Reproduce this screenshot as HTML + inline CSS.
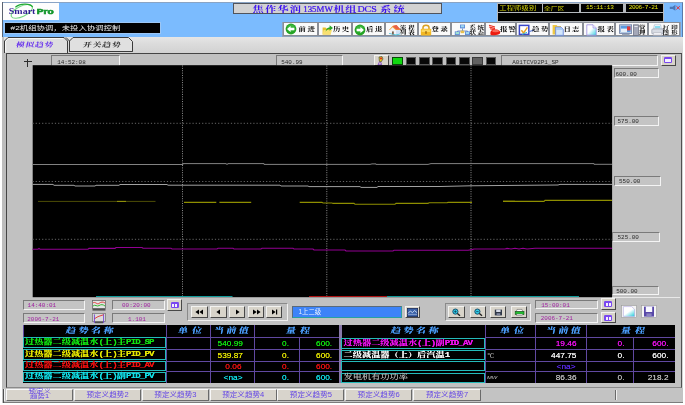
<!DOCTYPE html>
<html lang="zh">
<head>
<meta charset="utf-8">
<title>焦作华润135MW机组DCS系统</title>
<style>
html,body{margin:0;padding:0;}
body{width:685px;height:405px;background:#fff;position:relative;overflow:hidden;font-family:"Liberation Sans","Noto Sans CJK SC",sans-serif;}
.a{position:absolute;box-sizing:border-box;}
.t{position:absolute;white-space:nowrap;line-height:1;}
.q{transform:scaleY(0.74);transform-origin:50% 50%;}
.kai{font-family:"Liberation Serif","Noto Serif CJK SC",serif;font-style:normal;font-weight:bold;}
.kai.q{transform:scaleY(0.74) skewX(-9deg);}
.song{font-family:"Liberation Serif","Noto Serif CJK SC",serif;}
.mono{font-family:"Liberation Mono","Noto Sans CJK SC",monospace;}
.sunk{position:absolute;box-sizing:border-box;background:#c4c4c4;border:1px solid;border-color:#7a7a7a #f4f4f4 #f4f4f4 #7a7a7a;}
.btn{position:absolute;box-sizing:border-box;background:#d8d4ca;border:1px solid;border-color:#f2f2f0 #484848 #484848 #f2f2f0;}
.tb{position:absolute;box-sizing:border-box;top:22px;height:14px;background:#fafafa;border:1px solid #8a8e96;}
.tb .t{color:#000;font-size:7.4px;font-style:normal;font-weight:700;transform:scaleY(0.76);transform-origin:50% 50%;}
.tb .t.s{font-size:6.5px;}
.blk{position:absolute;background:#000;}
.yl{color:#e4e410;font-size:7.5px;}
.nm{position:absolute;box-sizing:border-box;border:1px solid #24baba;height:12px;}
.nm span.song{position:absolute;left:1.4px;top:-0.2px;font-size:9.2px;line-height:9.2px;font-weight:bold;white-space:nowrap;letter-spacing:0px;transform:scaleY(0.76);transform-origin:0 50%;text-shadow:0 0 0.5px currentColor;}
.nm i{font-family:"Liberation Mono",monospace;font-style:normal;font-size:9.2px;letter-spacing:-0.92px;font-weight:bold;}
.v{position:absolute;font-size:8.3px;line-height:11px;margin-top:1px;text-shadow:0 0 0.6px currentColor;transform:scaleY(0.76);transform-origin:50% 50%;text-align:right;white-space:nowrap;}
.hd{position:absolute;font-size:10px;line-height:12px;text-shadow:0 0 0.5px currentColor;transform:scaleY(0.76) skewX(-9deg);transform-origin:50% 50%;color:#4a9cf8;font-weight:700 !important;white-space:nowrap;letter-spacing:2.5px;}
.bt{display:inline-block;transform:scaleY(0.88);transform-origin:50% 50%;}
.bb{position:absolute;box-sizing:border-box;top:389px;height:12px;background:#d8d4cc;border:1px solid;border-color:#f8f8f8 #6a6a6a #6a6a6a #f8f8f8;color:#6446e6;font-size:7.6px;line-height:10px;text-align:center;white-space:nowrap;}
</style>
</head>
<body>
<div id="root" style="position:absolute;left:0;top:0;width:685px;height:405px;will-change:transform;">
<!-- window -->
<div class="a" style="left:2px;top:2px;width:681px;height:401px;background:#d4d4d4;"></div>
<div class="a" style="left:2px;top:2px;width:1px;height:35px;background:#5a6270;"></div>
<!-- blue header -->
<div class="a" style="left:3px;top:2px;width:680px;height:35px;background:#7bbbfe;border-top:1px solid #8aa4c4;border-right:1px solid #5a7aa8;"></div>

<!-- logo -->
<div class="a" style="left:3px;top:3px;width:56px;height:17px;background:#fdfdfd;"></div>
<svg class="a" style="left:3px;top:3px;" width="56" height="17" viewBox="0 0 56 17">
<ellipse cx="18.8" cy="8.4" rx="11.6" ry="5.2" transform="rotate(-26 18.8 8.4)" fill="none" stroke="#3cc850" stroke-width="1" opacity="0.7"/>
<path d="M12.4 4.2 C17 0.4 27 0 29.6 4" fill="none" stroke="#1faa34" stroke-width="1.3"/>
<text x="5.8" y="10.9" font-family="Liberation Serif, serif" font-weight="bold" font-size="8.2" fill="#2c1c90" textLength="26.6" lengthAdjust="spacingAndGlyphs">Smart</text>
<text x="33.8" y="10.8" font-family="Liberation Sans, sans-serif" font-weight="bold" font-size="7" fill="#12962a" stroke="#12962a" stroke-width="0.55" textLength="17" lengthAdjust="spacingAndGlyphs">Pro</text>
</svg>
<!-- message bar -->
<div class="a" style="left:4px;top:22px;width:157px;height:12px;background:#9cc6f4;"></div>
<div class="blk" style="left:5px;top:23px;width:155px;height:10px;"></div>
<div class="t q" style="left:10.5px;top:24.2px;font-size:8.4px;font-weight:400;color:#ececec;">#2机组协调，未投入协调控制</div>
<!-- title -->
<div class="a" style="left:233px;top:3px;width:209px;height:11px;background:#d2d2d2;border:1px solid #50545c;"></div>
<svg class="a" style="left:233px;top:3px;" width="209" height="11" viewBox="233 3 209 11" id="title">
<g transform="translate(0 12.3) scale(1 0.7)" font-family="Liberation Serif, Noto Serif CJK SC, serif" fill="#3a10f0">
<text x="252.6" y="0" font-size="11.2" font-weight="700" textLength="48.4" lengthAdjust="spacing">焦作华润</text>
<text x="303.2" y="0" font-size="12.8" stroke="#3a10f0" stroke-width="0.35" textLength="29.6" lengthAdjust="spacingAndGlyphs">135MW</text>
<text x="333.4" y="0" font-size="11.2" font-weight="700" textLength="23" lengthAdjust="spacing">机组</text>
<text x="357.4" y="0" font-size="12.8" stroke="#3a10f0" stroke-width="0.35" textLength="19.4" lengthAdjust="spacingAndGlyphs">DCS</text>
<text x="380" y="0" font-size="11.2" font-weight="700" textLength="24.6" lengthAdjust="spacing">系统</text>
</g></svg>

<!-- top-right status -->
<div class="a" style="left:497px;top:3px;width:167px;height:19px;background:#b4b8bc;"></div>
<div class="blk" style="left:497.5px;top:3.5px;width:44.5px;height:8px;"></div>
<div class="blk" style="left:542.8px;top:3.5px;width:36.2px;height:8px;"></div>
<div class="blk" style="left:581px;top:3.5px;width:42px;height:8px;"></div>
<div class="blk" style="left:625.5px;top:3.5px;width:37.5px;height:8px;"></div>
<div class="blk" style="left:497.5px;top:12.8px;width:165.5px;height:8px;"></div>
<div class="t yl q" style="left:499.2px;top:4.9px;font-size:7.3px;font-weight:400;letter-spacing:0.15px;color:#d4d408;">工程师级别</div>
<div class="t yl q" style="left:543.8px;top:4.9px;font-size:6.9px;font-weight:400;letter-spacing:0px;color:#d4d408;">全厂区</div>
<div class="t yl mono" style="left:586px;top:5.4px;font-size:6.1px;letter-spacing:-0.2px;">15:11:13</div>
<div class="t yl mono" style="left:628.8px;top:5.4px;font-size:6.1px;letter-spacing:-0.45px;">2006-7-21</div>
<!-- speaker -->
<svg class="a" style="left:668.5px;top:4px;" width="13" height="8" viewBox="0 0 13 8">
<path d="M0.8 2.8 H3.6 L6.4 0.8 V6.8 L3.6 5 H0.8 Z" fill="#4a78b8"/>
<path d="M7.4 2.2 L10.8 5.4 M10.8 2.2 L7.4 5.4" stroke="#f02020" stroke-width="0.9" fill="none"/>
</svg>
<!-- toolbar -->
<div class="a" style="left:282px;top:21.5px;width:399px;height:15px;background:#8fa2ba;"></div>
<div class="tb" style="left:283px;width:35px;">
 <svg class="a" style="left:0.6px;top:0.4px;" width="12" height="12" viewBox="0 0 12 12"><circle cx="6" cy="6" r="5.4" fill="#25a425"/><circle cx="6" cy="5" r="3.6" fill="#4ec44e" opacity="0.6"/><path d="M2 6 L5.6 3 V4.8 H9.4 V7.2 H5.6 V9 Z" fill="#fff"/></svg>
 <div class="t kai" style="left:14.5px;top:2.6px;letter-spacing:1.6px;">前进</div></div>
<div class="tb" style="left:318px;width:34px;">
 <svg class="a" style="left:2.6px;top:0.6px;" width="12" height="11" viewBox="0 0 12 11"><path d="M0.6 3.6 H3.6 L4.4 4.6 H8.6 V10.4 H0.6 Z" fill="#e8c030"/><path d="M1.6 6 H10 L8.6 10.4 H0.6 Z" fill="#f8e070"/><path d="M3.6 7.6 C4 4.8 5.6 3.4 7.6 3.2 V1.2 L11 4 L7.6 6.8 V5 C6 5.2 4.8 6 3.6 7.6 Z" fill="#2aa82a"/></svg>
 <div class="t kai" style="left:14.0px;top:2.6px;letter-spacing:1.4px;">历史</div></div>
<div class="tb" style="left:352px;width:33px;">
 <svg class="a" style="left:0.5px;top:0.5px;" width="12" height="12" viewBox="0 0 12 12"><circle cx="6" cy="6" r="5.4" fill="#25a425"/><circle cx="6" cy="5" r="3.6" fill="#4ec44e" opacity="0.6"/><path d="M10 6 L6.4 3 V4.8 H2.6 V7.2 H6.4 V9 Z" fill="#fff"/></svg>
 <div class="t kai" style="left:13.0px;top:2.6px;letter-spacing:1.5px;">后退</div></div>
<div class="tb" style="left:385px;width:33px;">
 <svg class="a" style="left:1.5px;top:0.5px;" width="13" height="12" viewBox="0 0 13 12"><path d="M0.5 6.5 L4.5 2 L8.5 1 L12.5 5.5 L12 6 H0.8 Z" fill="#f0a23a"/><path d="M4.5 2 L8.5 1 L12.5 5.5 L8.4 5.5 Z" fill="#e8604a"/><path d="M1.5 6.2 L4.6 3.2 L8 6.2 V11 H1.5 Z" fill="#f2f2f6"/><path d="M8 6.2 H12 V10 L8 11 Z" fill="#cfe0f4"/><path d="M1 9.8 L8 11.4 L12.4 10.2 L12.4 9.4 L8 10.4 L1 9 Z" fill="#4cc4dc"/><rect x="4" y="7.4" width="1.8" height="3" fill="#7a6450"/></svg>
 <div class="t kai s" style="left:13.7px;top:0.6px;letter-spacing:2.0px;">流程</div>
 <div class="t kai s" style="left:13.7px;top:5.9px;letter-spacing:2.0px;">列表</div></div>
<div class="tb" style="left:418px;width:33px;">
 <svg class="a" style="left:1px;top:0.5px;" width="12" height="12" viewBox="0 0 12 12"><path d="M3 5.5 V3.6 C3 0.4 9 0.4 9 3.6 V5.5" fill="none" stroke="#d8a020" stroke-width="1.5"/><rect x="0.8" y="4.8" width="10.4" height="6.6" rx="1" fill="#f2b824"/><rect x="1.6" y="5.6" width="8.8" height="2.4" fill="#fbd760"/><rect x="5.2" y="7.2" width="1.6" height="2.6" fill="#a87410"/></svg>
 <div class="t kai" style="left:12.5px;top:2.6px;letter-spacing:1.5px;">登录</div></div>
<div class="tb" style="left:451px;width:34px;">
 <svg class="a" style="left:1.5px;top:0.5px;" width="17" height="12" viewBox="0 0 17 12"><path d="M8.5 4.5 V7 M3.5 8.5 V7 H13.5 V8.5" stroke="#6a8ac0" stroke-width="0.9" fill="none"/><rect x="6" y="0.6" width="5" height="3.8" fill="#5a86d8"/><rect x="6.8" y="1.2" width="3.4" height="2.2" fill="#9fd8f0"/><rect x="0.8" y="7.4" width="5" height="3.8" fill="#5a86d8"/><rect x="1.6" y="8" width="3.4" height="2.2" fill="#9fe0d0"/><rect x="11" y="7.4" width="5" height="3.8" fill="#5a86d8"/><rect x="11.8" y="8" width="3.4" height="2.2" fill="#9fd8f0"/><rect x="6.6" y="6.6" width="3.6" height="2.6" fill="#e8c050"/></svg>
 <div class="t kai s" style="left:17.5px;top:0.6px;letter-spacing:1.6px;">系统</div>
 <div class="t kai s" style="left:17.5px;top:5.9px;letter-spacing:1.6px;">状态</div></div>
<div class="tb" style="left:485px;width:31px;">
 <svg class="a" style="left:1.5px;top:0.5px;" width="13" height="12" viewBox="0 0 13 12"><path d="M1 1.2 L7 3 M1.2 3 L7 4.6 M2 4.8 L7 6" stroke="#ee2a1a" stroke-width="1.1"/><path d="M2.4 8.4 C2.4 5.6 6 5 9 5.6 C12 6.2 12.6 8 12 9.6 C10 11.6 4 11.8 2.4 10.4 Z" fill="#ee1c10"/><ellipse cx="7.6" cy="7" rx="3.4" ry="1.2" fill="#fa6a5a"/></svg>
 <div class="t kai" style="left:13.9px;top:2.6px;letter-spacing:1.2px;">报警</div></div>
<div class="tb" style="left:516px;width:33px;">
 <svg class="a" style="left:0.5px;top:0.5px;" width="17" height="12" viewBox="0 0 17 12"><rect x="1.4" y="1.4" width="9.4" height="9" fill="#fff" stroke="#3a46c8" stroke-width="1.5"/><path d="M3.4 6.2 L5.6 9 L9.4 3.4" fill="none" stroke="#e8a020" stroke-width="1.4"/><path d="M10 8 L16 6" stroke="#5a7ad8" stroke-width="1.2"/><path d="M4 10.4 L9 8.4" stroke="#30b8c8" stroke-width="1"/></svg>
 <div class="t kai" style="left:15.0px;top:2.6px;letter-spacing:1.6px;">趋势</div></div>
<div class="tb" style="left:549px;width:34px;">
 <svg class="a" style="left:2px;top:0.5px;" width="12" height="12" viewBox="0 0 12 12"><path d="M0.6 1 H4.6 L5.4 2 H9 V10.6 H0.6 Z" fill="#f0c840"/><path d="M3.4 3 H9 L11.4 5.4 V11.6 H3.4 Z" fill="#a8c8f4" stroke="#6a84d8" stroke-width="0.7"/><rect x="4.4" y="6" width="6" height="4.6" fill="#d4e6fb"/></svg>
 <div class="t kai" style="left:13.5px;top:2.6px;letter-spacing:1.2px;">日志</div></div>
<div class="tb" style="left:583px;width:32px;">
 <svg class="a" style="left:1.5px;top:0.5px;" width="11" height="12" viewBox="0 0 11 12"><defs><linearGradient id="dg" x1="0" y1="0" x2="1" y2="1"><stop offset="0.45" stop-color="#fff"/><stop offset="1" stop-color="#35d0e0"/></linearGradient></defs><path d="M0.8 0.8 H7 L10.2 4 V11.2 H0.8 Z" fill="url(#dg)" stroke="#9a8ae0" stroke-width="0.8"/><path d="M7 0.8 V4 H10.2" fill="#e8e4fb" stroke="#9a8ae0" stroke-width="0.6"/></svg>
 <div class="t kai" style="left:13.6px;top:2.6px;letter-spacing:1.6px;">报表</div></div>
<div class="tb" style="left:615px;width:33px;">
 <svg class="a" style="left:3px;top:0.5px;" width="21" height="12" viewBox="0 0 21 12"><rect x="0.6" y="0.8" width="12" height="8.6" fill="#c8d4e4" stroke="#6a7aa0" stroke-width="0.8"/><rect x="1.6" y="1.8" width="10" height="6.4" fill="#5a9ae0"/><rect x="2" y="4.6" width="6" height="3.4" fill="#e8f0f8"/><rect x="8" y="2.4" width="3.4" height="4" fill="#e03a3a"/><rect x="3" y="10" width="7.6" height="1.4" fill="#9aa4b4"/><rect x="14.4" y="0.8" width="5.2" height="10.6" fill="#a4a8b8" stroke="#6a6e80" stroke-width="0.7"/><rect x="15.4" y="2" width="3.2" height="1" fill="#e8e8f0"/></svg>
 <div class="t kai s" style="left:23.0px;top:0.6px;letter-spacing:0px;">管</div>
 <div class="t kai s" style="left:23.0px;top:5.9px;letter-spacing:0px;">理</div></div>
<div class="tb" style="left:648px;width:32px;">
 <svg class="a" style="left:2px;top:0.5px;" width="13" height="12" viewBox="0 0 13 12"><path d="M3.4 0.8 H9.6 L10.4 5 H2.6 Z" fill="#fff" stroke="#9ab0c8" stroke-width="0.6"/><path d="M4 2 H9 L9.4 4.2 H3.6 Z" fill="#8adcf0"/><path d="M0.8 5.6 C0.8 4.6 12.2 4.6 12.2 5.6 V9.4 H0.8 Z" fill="#d8dce4" stroke="#8a92a4" stroke-width="0.6"/><path d="M2.6 8.6 H10.4 L11 11.2 H2 Z" fill="#f4f4f8" stroke="#a0a4b0" stroke-width="0.5"/></svg>
 <div class="t kai s" style="left:13.5px;top:0.6px;letter-spacing:2.2px;">打印</div>
 <div class="t kai s" style="left:13.5px;top:5.9px;letter-spacing:2.2px;">图形</div></div>

<!-- tab strip -->
<div class="a" style="left:3px;top:37px;width:680px;height:16px;background:linear-gradient(#e6e6e6,#dcdcdc 40%,#d2d2d2);"></div>
<div class="a" style="left:2px;top:53px;width:4px;height:335px;background:#bdbdbd;"></div><div class="a" style="left:2px;top:37px;width:2px;height:16px;background:#bcbcbc;"></div>
<svg class="a" style="left:0;top:36px;" width="140" height="18" viewBox="0 36 140 18">
<path d="M4.5 53 V41 L8 37.5 H64 L67.5 41 V53 Z" fill="#dedede" stroke="none"/><path d="M4.5 53 V41 L8 37.5 H64 L67.5 41 V53" fill="none" stroke="#3a3a3a" stroke-width="1"/>
<path d="M5.6 52 V41.4 L8.4 38.6 H63" fill="none" stroke="#fafafa" stroke-width="1"/>
<path d="M69.5 51.5 V41 L73 37.5 H128.5 L132.5 41.5 V51.5 Z" fill="#e0e0e0" stroke="#3a3a3a" stroke-width="1"/><path d="M69.5 41 L66 37.5" fill="none" stroke="#3a3a3a" stroke-width="1"/>
<path d="M69.5 51.5 H132.5" stroke="#3a3a3a" stroke-width="1"/>
</svg>
<div class="t kai q" style="left:16.4px;top:40.6px;font-size:8.8px;color:#642cee;font-weight:700;letter-spacing:0.7px;">模拟趋势</div>
<div class="t kai q" style="left:82.8px;top:40.6px;font-size:8.8px;color:#303030;font-weight:700;letter-spacing:0.8px;">开关趋势</div>
<!-- main panel -->
<div class="a" style="left:6px;top:53px;width:676px;height:334.5px;background:#c1c1c1;border:1px solid;border-color:#454545 #505050 #8a8a8a #454545;"></div>

<!-- crosshair -->
<div class="a" style="left:24.4px;top:60.8px;width:7.2px;height:1px;background:#2c2c2c;"></div>
<div class="a" style="left:27.4px;top:58.8px;width:1px;height:8.2px;background:#2c2c2c;"></div>
<!-- top fields -->
<div class="sunk" style="left:51px;top:55px;width:69px;height:11px;"></div>
<div class="t mono" style="left:57.2px;top:59.9px;font-size:5.95px;color:#2a2a2a;">14:52:08</div>
<div class="sunk" style="left:276px;top:55px;width:67px;height:11px;"></div>
<div class="t mono" style="left:281.2px;top:59.9px;font-size:5.95px;color:#2a2a2a;">540.99</div>
<div class="btn" style="left:373.5px;top:54.5px;width:15px;height:11.5px;"></div>
<svg class="a" style="left:377px;top:55.5px;" width="8" height="10" viewBox="0 0 8 10"><path d="M2 1 L5 0.6 L6 3 L4 6 L2.4 5.4 Z" fill="#e8d020" stroke="#303030" stroke-width="0.6"/><circle cx="4" cy="2.6" r="1" fill="#e02020"/><path d="M2.6 5.6 L1 9 L4.6 8.6 L3.6 6" fill="none" stroke="#7030c0" stroke-width="0.8"/></svg>
<div class="a" style="left:392px;top:56.5px;width:10.5px;height:8px;background:#10d810;border:1px solid #084808;"></div>
<div class="a" style="left:405.5px;top:56.5px;width:10.5px;height:8px;background:#080808;border:1px solid #5a5a5a;"></div>
<div class="a" style="left:419px;top:56.5px;width:10.5px;height:8px;background:#080808;border:1px solid #5a5a5a;"></div>
<div class="a" style="left:432px;top:56.5px;width:10.5px;height:8px;background:#080808;border:1px solid #5a5a5a;"></div>
<div class="a" style="left:445.5px;top:56.5px;width:10.5px;height:8px;background:#080808;border:1px solid #5a5a5a;"></div>
<div class="a" style="left:459px;top:56.5px;width:10.5px;height:8px;background:#080808;border:1px solid #5a5a5a;"></div>
<div class="a" style="left:472px;top:56.5px;width:10.5px;height:8px;background:#606060;border:1px solid #3a3a3a;"></div>
<div class="a" style="left:485.5px;top:56.5px;width:10.5px;height:8px;background:#080808;border:1px solid #5a5a5a;"></div>
<div class="sunk" style="left:500.5px;top:55px;width:157px;height:11px;"></div>
<div class="t mono" style="left:512.2px;top:59.9px;font-size:5.95px;color:#2a2a2a;">A01TCV02P1_SP</div>
<div class="btn" style="left:660.5px;top:54.5px;width:15px;height:11.5px;"></div>
<div class="a" style="left:664.0px;top:57.0px;width:8px;height:6.2px;background:#7a48f0;border-radius:1.2px;"></div><div class="a" style="left:665.3px;top:59.0px;width:2.3px;height:3px;background:#f4f0ff;"></div><div class="a" style="left:668.4px;top:59.0px;width:2.3px;height:3px;background:#f4f0ff;"></div>

<!-- chart -->
<svg class="a" style="left:32px;top:65px;" width="581" height="233" viewBox="32 65 581 233">
<rect x="32.7" y="65.2" width="579.4" height="232" fill="#000"/>
<path d="M32.5 123.3 H612 M32.5 181.5 H612 M32.5 239.3 H612" stroke="#666666" stroke-width="1" stroke-dasharray="1.2 2" fill="none"/>
<path d="M182.5 65.5 V297 M326.8 65.5 V297 M471 65.5 V297" stroke="#8e8e8e" stroke-width="1" stroke-dasharray="1 1.37" fill="none"/>
<path d="M32.5 164.5 H183 V163.6 H226 V164.1 H228 V163.6 H264 V164.4 H370 L372 163.9 H376 V164.4 H428 L431 163.6 H594 V164.3 H612" fill="none" stroke="#828282" stroke-width="1"/>
<path d="M32.5 184.4 H53 L54 185.3 H74 L75 186 H95 L96 185.3 H119 L120 184.5 H167 L168 185.2 H280 L281 186 H308 L309 186.6 H360 L361 187.4 H377 L378 186.5 H440 L470 185.8 L500 185.5 L558 185 L560 184.4 H612" fill="none" stroke="#a2a2a2" stroke-width="1"/>
<path d="M38 201.4 H155.5" fill="none" stroke="#4e4e06" stroke-width="1"/>
<path d="M117 201.4 H126" fill="none" stroke="#98980c" stroke-width="1"/>
<path d="M184 202.4 H216.3 M219.4 202.4 H251.2 M299.7 202.4 H322 L323 203 H332 L333 203.4 H354 L355 204.2 H395 L396 203.4 H428 L429 202.7 H447 L448 202.4 H472 M503 201.4 H515" fill="none" stroke="#8e8e00" stroke-width="1.1"/>
<path d="M503 201.4 H544 L545 200.4 H612" fill="none" stroke="#8e8e00" stroke-width="1.1"/>
<path d="M32.5 249.2 H38 L39 248.4 L40 249.2 H88 L89 248.4 H115 L116 247.5 H142 L143 248.3 H171 L172 249 H217 L218 248.3 H233 L234 249 H261 L262 248.3 H293 L294 249 H313 L314 250 H345 L346 251 H393 L394 250.3 H468 L472 249.6 L474 249 H505 L507 248.4 L511 249 L515 248.3 L519 249 L523 248.3 L527 249 L535 248.2 H612" fill="none" stroke="#920092" stroke-width="1.1"/>
<path d="M96 296.5 H232.5 M387 296.5 H579" stroke="#129c9c" stroke-width="1.1"/>
<path d="M309 296.5 H387" stroke="#b01414" stroke-width="1.1"/>
</svg>
<!-- right scale labels -->
<div class="sunk" style="left:614px;top:68px;width:45px;height:10px;"></div><div class="t mono" style="left:615.4px;top:72px;font-size:5.95px;color:#2a2a2a;">600.00</div>
<div class="sunk" style="left:613.5px;top:115.5px;width:45.5px;height:10px;"></div><div class="t mono" style="left:617.5px;top:119.0px;font-size:5.95px;color:#2a2a2a;">575.00</div>
<div class="sunk" style="left:613.5px;top:176px;width:47px;height:10px;"></div><div class="t mono" style="left:619.0px;top:179.4px;font-size:5.95px;color:#2a2a2a;">550.00</div>
<div class="sunk" style="left:612px;top:231.7px;width:48px;height:10px;"></div><div class="t mono" style="left:617.5px;top:235.2px;font-size:5.95px;color:#2a2a2a;">525.00</div>
<div class="sunk" style="left:612px;top:285.5px;width:47px;height:9.8px;"></div><div class="t mono" style="left:616.2px;top:288.8px;font-size:5.95px;color:#2a2a2a;">500.00</div>
<div class="a" style="left:612px;top:296.5px;width:68px;height:1px;background:#e8e8e8;"></div>
<!-- control row -->
<div class="sunk" style="left:23px;top:300px;width:62px;height:9.5px;"></div><div class="t mono" style="left:27.6px;top:303.1px;font-size:5.95px;color:#a020a0;">14:40:01</div>
<div class="sunk" style="left:23px;top:313.3px;width:62px;height:9.8px;"></div><div class="t mono" style="left:27.3px;top:316.6px;font-size:5.95px;color:#a020a0;">2006-7-21</div>
<div class="sunk" style="left:112px;top:300px;width:53px;height:9.5px;"></div><div class="t mono" style="left:122.0px;top:303.3px;font-size:5.95px;color:#a020a0;">00:20:00</div>
<div class="sunk" style="left:112px;top:313.3px;width:53px;height:9.8px;"></div><div class="t mono" style="left:128.0px;top:316.6px;font-size:5.95px;color:#a020a0;">1.101</div>
<div class="sunk" style="left:534.5px;top:300.3px;width:63.5px;height:9.2px;"></div><div class="t mono" style="left:541.2px;top:302.9px;font-size:5.95px;color:#a020a0;">15:00:01</div>
<div class="sunk" style="left:534.5px;top:313.3px;width:63.5px;height:9.5px;"></div><div class="t mono" style="left:540.8px;top:316.2px;font-size:5.95px;color:#a020a0;">2006-7-21</div>
<svg class="a" style="left:92px;top:300px;" width="14" height="11" viewBox="0 0 14 11"><rect x="0.5" y="0.5" width="13" height="8" fill="#e4e4e4" stroke="#6a6a6a" stroke-width="0.8"/><path d="M1 3 C3 1 5 5 7 3.4 S11 1.6 13 3" fill="none" stroke="#e03030" stroke-width="0.9"/><path d="M1 6 C3 4 5 7 7 5.6 S11 4.4 13 6" fill="none" stroke="#20b020" stroke-width="0.9"/><rect x="0.5" y="8.6" width="13" height="2" fill="#505050"/></svg>
<svg class="a" style="left:92px;top:313px;" width="14" height="11" viewBox="0 0 14 11"><rect x="0.5" y="0.5" width="13" height="8" fill="#dcdcdc" stroke="#7a7a7a" stroke-width="0.8"/><path d="M2 6 L6 3.6 L12 1.6" fill="none" stroke="#e03030" stroke-width="0.9"/><path d="M2.4 1.4 V10 M11.6 1.4 V10" stroke="#7040d0" stroke-width="0.9"/><rect x="3" y="8.6" width="8" height="1.6" fill="#505050"/></svg>
<div class="btn" style="left:167px;top:298.8px;width:15px;height:12px;"></div><div class="a" style="left:170.7px;top:301.6px;width:8px;height:6.2px;background:#7a48f0;border-radius:1.2px;"></div><div class="a" style="left:172.0px;top:303.6px;width:2.3px;height:3px;background:#f4f0ff;"></div><div class="a" style="left:175.1px;top:303.6px;width:2.3px;height:3px;background:#f4f0ff;"></div>
<div class="btn" style="left:601px;top:298.4px;width:14.5px;height:11.6px;"></div><div class="a" style="left:604.45px;top:301.0px;width:8px;height:6.2px;background:#7a48f0;border-radius:1.2px;"></div><div class="a" style="left:605.75px;top:303.0px;width:2.3px;height:3px;background:#f4f0ff;"></div><div class="a" style="left:608.85px;top:303.0px;width:2.3px;height:3px;background:#f4f0ff;"></div>
<div class="btn" style="left:601px;top:312px;width:14.5px;height:11.4px;"></div><div class="a" style="left:604.45px;top:314.5px;width:8px;height:6.2px;background:#7a48f0;border-radius:1.2px;"></div><div class="a" style="left:605.75px;top:316.5px;width:2.3px;height:3px;background:#f4f0ff;"></div><div class="a" style="left:608.85px;top:316.5px;width:2.3px;height:3px;background:#f4f0ff;"></div>
<div class="a" style="left:186.5px;top:302.5px;width:101px;height:18.5px;border:1px solid;border-color:#8a8a8a #f0f0f0 #f0f0f0 #8a8a8a;"></div>
<div class="a" style="left:445px;top:302.5px;width:86px;height:18.5px;border:1px solid;border-color:#8a8a8a #f0f0f0 #f0f0f0 #8a8a8a;"></div>
<div class="btn" style="left:191.4px;top:305.8px;width:16.3px;height:12px;"><svg class="a" style="left:0;top:0;" width="15" height="10" viewBox="0 0 15 10"><path d="M7 2.4 L3.4 5 L7 7.6 Z M11 2.4 L7.4 5 L11 7.6 Z" fill="#000"/></svg></div>
<div class="btn" style="left:210.3px;top:305.8px;width:16.3px;height:12px;"><svg class="a" style="left:0;top:0;" width="15" height="10" viewBox="0 0 15 10"><path d="M9 2.4 L5.4 5 L9 7.6 Z" fill="#000"/></svg></div>
<div class="btn" style="left:229px;top:305.8px;width:16.3px;height:12px;"><svg class="a" style="left:0;top:0;" width="15" height="10" viewBox="0 0 15 10"><path d="M6 2.4 L9.6 5 L6 7.6 Z" fill="#000"/></svg></div>
<div class="btn" style="left:247.8px;top:305.8px;width:16.3px;height:12px;"><svg class="a" style="left:0;top:0;" width="15" height="10" viewBox="0 0 15 10"><path d="M4 2.4 L7.6 5 L4 7.6 Z M8 2.4 L11.6 5 L8 7.6 Z" fill="#000"/></svg></div>
<div class="btn" style="left:266px;top:305.8px;width:16.3px;height:12px;"><svg class="a" style="left:0;top:0;" width="15" height="10" viewBox="0 0 15 10"><path d="M5 2.4 L8.6 5 L5 7.6 Z M9 2.4 H10.2 V7.6 H9 Z" fill="#000"/></svg></div>
<div class="a" style="left:292px;top:306px;width:110px;height:11.6px;background:#3d83f8;border:1px solid;border-color:#5a6a7a #2aa0a0 #2aa0a0 #5a6a7a;"></div>
<div class="t" style="left:298.5px;top:308.6px;font-size:6.4px;color:#e8f0ff;">1上二级</div>
<div class="btn" style="left:405px;top:305.8px;width:14.6px;height:12.2px;"></div><svg class="a" style="left:407px;top:307.5px;" width="11" height="9" viewBox="0 0 11 9"><rect x="0.4" y="0.4" width="10.2" height="8.2" fill="#3a62a8" stroke="#1a2a58" stroke-width="0.8"/><path d="M1 5.4 L3.4 3 L5.4 4.6 L7.6 2.6 L10 4.6" fill="none" stroke="#e8f0ff" stroke-width="0.8"/><path d="M1 6.4 H10" stroke="#b8c8e8" stroke-width="0.6"/></svg>
<div class="btn" style="left:448.4px;top:306px;width:16.2px;height:12px;"><svg class="a" style="left:0;top:0;" width="15" height="10" viewBox="0 0 15 10"><circle cx="6.4" cy="4.6" r="2.6" fill="#30d0e8" stroke="#104060" stroke-width="0.9"/><path d="M8.4 6.4 L11 8.8" stroke="#202020" stroke-width="1.3"/><path d="M5.2 4.6 H7.6" stroke="#104060" stroke-width="0.8"/><path d="M6.4 3.4 V5.8" stroke="#104060" stroke-width="0.8"/></svg></div>
<div class="btn" style="left:470px;top:306px;width:16.2px;height:12px;"><svg class="a" style="left:0;top:0;" width="15" height="10" viewBox="0 0 15 10"><circle cx="6.4" cy="4.6" r="2.6" fill="#30d0e8" stroke="#104060" stroke-width="0.9"/><path d="M8.4 6.4 L11 8.8" stroke="#202020" stroke-width="1.3"/><path d="M5.2 4.6 H7.6" stroke="#104060" stroke-width="0.8"/></svg></div>
<div class="btn" style="left:489.5px;top:306px;width:16.2px;height:12px;"><svg class="a" style="left:0;top:0;" width="15" height="10" viewBox="0 0 15 10"><rect x="3.8" y="2.6" width="7.2" height="5.8" fill="#303848"/><rect x="5.2" y="2.6" width="4.4" height="2.4" fill="#d8dce8"/><rect x="5.6" y="6.2" width="3.6" height="2.2" fill="#8088a0"/></svg></div>
<div class="btn" style="left:511px;top:306px;width:16.2px;height:12px;"><svg class="a" style="left:0;top:0;" width="15" height="10" viewBox="0 0 15 10"><path d="M5 2.4 H10 L10.8 4.8 H4.2 Z" fill="#fff" stroke="#505050" stroke-width="0.5"/><rect x="3.2" y="4.6" width="8.8" height="3" fill="#20c030" stroke="#0a4a10" stroke-width="0.6"/><rect x="4.6" y="7" width="6" height="1.6" fill="#e8e8e8" stroke="#505050" stroke-width="0.4"/></svg></div>
<svg class="a" style="left:620.5px;top:304.5px;" width="16" height="13" viewBox="0 0 16 13"><defs><linearGradient id="dg2" x1="0.1" y1="0" x2="0.9" y2="1"><stop offset="0.5" stop-color="#fff"/><stop offset="1" stop-color="#2fd0dc"/></linearGradient></defs><rect x="0.5" y="0.5" width="15" height="12" fill="#f4f4f4" stroke="#9a9a9a" stroke-width="0.6"/><path d="M2.4 1.6 H10.6 L13.6 4.4 V11.4 H2.4 Z" fill="url(#dg2)" stroke="#b0a8e0" stroke-width="0.6"/></svg>
<svg class="a" style="left:641px;top:304.5px;" width="16" height="13" viewBox="0 0 16 13"><rect x="0.5" y="0.5" width="15" height="12" fill="#f4f4f4" stroke="#9a9a9a" stroke-width="0.6"/><path d="M3 1.6 H13 V11.6 H3 Z" fill="#5848a8"/><rect x="4.8" y="1.6" width="6.4" height="5.4" fill="#f8f8ff"/><rect x="5.4" y="8.4" width="5.2" height="3.2" fill="#8a84c0"/></svg>
<!-- tables -->
<div class="blk" style="left:23px;top:325px;width:316.3px;height:58px;"></div>
<div class="a" style="left:339.3px;top:325px;width:2.4px;height:58px;background:#8878a8;"></div>
<div class="blk" style="left:341.6px;top:325px;width:333px;height:58px;"></div>
<div class="a" style="left:166.3px;top:325px;width:1px;height:58px;background:#6048a0;"></div>
<div class="a" style="left:209.7px;top:325px;width:1px;height:58px;background:#6048a0;"></div>
<div class="a" style="left:253.7px;top:325px;width:1px;height:58px;background:#6048a0;"></div>
<div class="a" style="left:298.7px;top:337.5px;width:1px;height:45.5px;background:#6048a0;"></div>
<div class="a" style="left:23px;top:325px;width:1px;height:12.5px;background:#6048a0;"></div>
<div class="a" style="left:166.5px;top:337.1px;width:172.8px;height:1px;background:#6048a0;"></div>
<div class="a" style="left:166.5px;top:348.9px;width:172.8px;height:1px;background:#6048a0;"></div>
<div class="a" style="left:166.5px;top:360.6px;width:172.8px;height:1px;background:#6048a0;"></div>
<div class="a" style="left:166.5px;top:370.90000000000003px;width:172.8px;height:1px;background:#6048a0;"></div>
<div class="a" style="left:484.8px;top:325px;width:1px;height:58px;background:#6048a0;"></div>
<div class="a" style="left:535.3px;top:325px;width:1px;height:58px;background:#6048a0;"></div>
<div class="a" style="left:586.2px;top:325px;width:1px;height:58px;background:#6048a0;"></div>
<div class="a" style="left:633.2px;top:337.5px;width:1px;height:45.5px;background:#6048a0;"></div>
<div class="a" style="left:485px;top:337.1px;width:189.60000000000002px;height:1px;background:#6048a0;"></div>
<div class="a" style="left:485px;top:348.9px;width:189.60000000000002px;height:1px;background:#6048a0;"></div>
<div class="a" style="left:485px;top:360.6px;width:189.60000000000002px;height:1px;background:#6048a0;"></div>
<div class="a" style="left:485px;top:370.90000000000003px;width:189.60000000000002px;height:1px;background:#6048a0;"></div>
<div class="hd kai" style="left:66px;top:325.3px;letter-spacing:2.5px;">趋势名称</div>
<div class="hd kai" style="left:178px;top:325.3px;letter-spacing:4px;">单位</div>
<div class="hd kai" style="left:213.5px;top:325.3px;letter-spacing:2.4px;">当前值</div>
<div class="hd kai" style="left:285.5px;top:325.3px;letter-spacing:4px;">量程</div>
<div class="hd kai" style="left:390.5px;top:325.3px;letter-spacing:2.5px;">趋势名称</div>
<div class="hd kai" style="left:499.5px;top:325.3px;letter-spacing:4px;">单位</div>
<div class="hd kai" style="left:545.5px;top:325.3px;letter-spacing:2.4px;">当前值</div>
<div class="hd kai" style="left:620.5px;top:325.3px;letter-spacing:4px;">量程</div>
<div class="v" style="left:203px;top:337.8px;width:40px;color:#10e410;">540.99</div>
<div class="v" style="left:249px;top:337.8px;width:40px;color:#10e410;">0.</div>
<div class="v" style="left:292.2px;top:337.8px;width:40px;color:#10e410;">600.</div>
<div class="v" style="left:203px;top:349.5px;width:40px;color:#e8e800;">539.87</div>
<div class="v" style="left:249px;top:349.5px;width:40px;color:#e8e800;">0.</div>
<div class="v" style="left:292.2px;top:349.5px;width:40px;color:#e8e800;">600.</div>
<div class="v" style="left:201.5px;top:361.2px;width:40px;color:#f01010;">0.06</div>
<div class="v" style="left:249px;top:361.2px;width:40px;color:#f01010;">0.</div>
<div class="v" style="left:292.2px;top:361.2px;width:40px;color:#f01010;">600.</div>
<div class="v" style="left:202.5px;top:371.6px;width:40px;color:#10e0e8;">&lt;na&gt;</div>
<div class="v" style="left:249px;top:371.6px;width:40px;color:#10e0e8;">0.</div>
<div class="v" style="left:292.2px;top:371.6px;width:40px;color:#10e0e8;">600.</div>
<div class="v" style="left:536.5px;top:337.8px;width:40px;color:#f010f0;">19.46</div>
<div class="v" style="left:584.5px;top:337.8px;width:40px;color:#f010f0;">0.</div>
<div class="v" style="left:628.5px;top:337.8px;width:40px;color:#f010f0;">600.</div>
<div class="v" style="left:536.5px;top:349.5px;width:40px;color:#f4f4f4;">447.75</div>
<div class="v" style="left:584.5px;top:349.5px;width:40px;color:#f4f4f4;">0.</div>
<div class="v" style="left:628.5px;top:349.5px;width:40px;color:#f4f4f4;">600.</div>
<div class="v" style="left:535.5px;top:361.2px;width:40px;color:#5828e8;">&lt;na&gt;</div>
<div class="v" style="left:536.5px;top:371.6px;width:40px;color:#b8b8b8;">86.36</div>
<div class="v" style="left:584.5px;top:371.6px;width:40px;color:#b8b8b8;">0.</div>
<div class="v" style="left:628.5px;top:371.6px;width:40px;color:#b8b8b8;">218.2</div>
<div class="t song q" style="left:487.3px;top:351.6px;font-size:6.8px;color:#e8e8e8;">℃</div>
<div class="t q" style="left:487px;top:374.6px;font-size:5.8px;font-style:italic;color:#c0c0c0;">MW</div>
<div class="nm" style="left:22.6px;top:337.2px;width:143.8px;height:11.2px;"><span class="song n1" style="color:#10e410;top:-0.3px;">过热器二级减温水<i>(</i>上<i>)</i>主<i>PID_SP</i></span></div>
<div class="nm" style="left:22.6px;top:349.3px;width:143.8px;height:10.5px;"><span class="song n1" style="color:#e8e800;top:-0.5px;">过热器二级减温水<i>(</i>上<i>)</i>主<i>PID_PV</i></span></div>
<div class="nm" style="left:22.6px;top:360.9px;width:143.8px;height:9.9px;"><span class="song n1" style="color:#f01010;top:-0.7px;">过热器二级减温水<i>(</i>上<i>)</i>主<i>PID_AV</i></span></div>
<div class="nm" style="left:22.6px;top:371.8px;width:143.8px;height:10.6px;"><span class="song n1" style="color:#10e0e8;top:-0.6px;">过热器二级减温水<i>(</i>上<i>)</i>副<i>PID_PV</i></span></div>
<div class="nm" style="left:341.4px;top:337.7px;width:143.6px;height:11.1px;"><span class="song n2" style="color:#f010f0;font-weight:bold;left:1.2px;top:-0.1px;">过热器二级减温水<i>(</i>上<i>)</i>副<i>PID_AV</i></span></div>
<div class="nm" style="left:341.4px;top:349.9px;width:143.6px;height:10.5px;"><span class="song n2" style="color:#f4f4f4;font-weight:bold;left:1.2px;top:-0.1px;">二级减温器（上）后汽温<i>1</i></span></div>
<div class="nm" style="left:341.4px;top:361.3px;width:143.6px;height:10.1px;"><span class="song n2" style="color:#5020e0;font-weight:normal;left:1.2px;top:-0.5px;"></span></div>
<div class="nm" style="left:341.4px;top:372.7px;width:143.6px;height:10.3px;"><span class="song n2" style="color:#b0b0b0;font-weight:normal;left:1.2px;top:-0.3px;">发电机有功功率</span></div>
<!-- bottom bar -->
<div class="a" style="left:2px;top:387.5px;width:681px;height:15.5px;background:#c3c3c3;"></div>
<div class="a" style="left:2.5px;top:402px;width:680.5px;height:1px;background:#7c7c7c;"></div>
<div class="a" style="left:2.5px;top:388.5px;width:1px;height:14px;background:#505050;"></div>
<div class="a" style="left:3.5px;top:388.8px;width:1.6px;height:12.6px;background:#f0f0f0;"></div>
<div class="bb" style="left:6px;width:67.3px;line-height:5.9px;font-size:7.5px;padding-top:0px;"><span class="bt" style="transform:scaleY(0.8);margin-top:-1.6px;">预定义<br>趋势1</span></div>
<div class="bb" style="left:73.8px;width:67.50000000000001px;"><span class="bt">预定义趋势2</span></div>
<div class="bb" style="left:141.8px;width:67.29999999999998px;"><span class="bt">预定义趋势3</span></div>
<div class="bb" style="left:209.6px;width:67.29999999999998px;"><span class="bt">预定义趋势4</span></div>
<div class="bb" style="left:277.4px;width:67.10000000000002px;"><span class="bt">预定义趋势5</span></div>
<div class="bb" style="left:345px;width:67.30000000000001px;"><span class="bt">预定义趋势6</span></div>
<div class="bb" style="left:412.8px;width:68.5px;"><span class="bt">预定义趋势7</span></div>
<div class="a" style="left:614.5px;top:390px;width:1px;height:10px;background:#6a6a6a;"></div><div class="a" style="left:615.5px;top:390px;width:1px;height:10px;background:#f0f0f0;"></div>
</div>
</body>
</html>
